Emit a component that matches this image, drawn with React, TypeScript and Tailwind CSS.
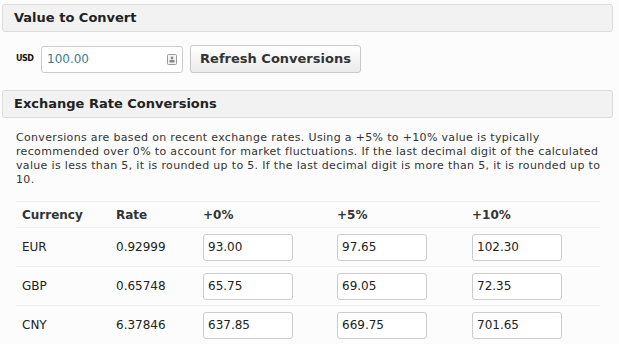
import React from "react";

const rows = [
  { code: "EUR", rate: "0.92999", values: ["93.00", "97.65", "102.30"] },
  { code: "GBP", rate: "0.65748", values: ["65.75", "69.05", "72.35"] },
  { code: "CNY", rate: "6.37846", values: ["637.85", "669.75", "701.65"] },
];

function SectionHeader({ title }: { title: string }) {
  return (
    <div className="ml-[2px] w-[611px] h-[28px] flex items-center px-[11px] bg-[#f2f2f2] border border-[#dcdcdc] rounded-[3px]">
      <h2 className="text-[13px] font-bold text-[#222]">{title}</h2>
    </div>
  );
}

function FieldIcon() {
  return (
    <svg width="10" height="11" viewBox="0 0 10 11" className="shrink-0">
      <rect x="0.5" y="0.5" width="9" height="10" rx="1" fill="#f4f4f4" stroke="#999" />
      <circle cx="5" cy="4" r="1.4" fill="#888" />
      <rect x="2.5" y="6" width="5" height="2.5" fill="#888" />
    </svg>
  );
}

export default function App() {
  return (
    <main
      className="w-[619px] h-[344px] overflow-hidden bg-[#fcfcfc] text-[#333] pt-[4px]"
      style={{ fontFamily: '"DejaVu Sans", Verdana, sans-serif' }}
    >
      <SectionHeader title="Value to Convert" />

      {/* Value input row */}
      <div className="flex items-center mt-[13px] pl-[16px] h-[28px]">
        <span className="text-[8px] font-bold tracking-[-0.5px] text-[#111] w-[25px]">USD</span>
        <div className="w-[142px] h-[27px] flex items-center justify-between px-[5px] bg-white border border-[#ccc] rounded-[3px]">
          <span className="text-[12px] text-[#3b7d8f]">100.00</span>
          <FieldIcon />
        </div>
        <button className="ml-[7px] w-[171px] h-[28px] flex items-center justify-center text-[13px] font-bold text-[#333] border border-[#c8c8c8] rounded-[3px] bg-gradient-to-b from-white to-[#ebebeb]">
          Refresh Conversions
        </button>
      </div>

      <div className="mt-[17px]">
        <SectionHeader title="Exchange Rate Conversions" />
      </div>

      <p className="ml-[16px] mt-[13px] w-[586px] text-[11px] leading-[14px] tracking-[0.33px] text-[#333]">
        Conversions are based on recent exchange rates. Using a +5% to +10% value is typically
        recommended over 0% to account for market fluctuations. If the last decimal digit of the
        calculated value is less than 5, it is rounded up to 5. If the last decimal digit is more
        than 5, it is rounded up to 10.
      </p>

      {/* Conversions table */}
      <div className="ml-[16px] mt-[14px] w-[584px] text-[12px]">
        <div className="grid grid-cols-[94px_87px_134px_135px_134px] h-[27px] items-center border-t border-b border-[#efefef] font-bold">
          <div className="pl-[6px]">Currency</div>
          <div className="pl-[6px]">Rate</div>
          <div className="pl-[6px]">+0%</div>
          <div className="pl-[6px]">+5%</div>
          <div className="pl-[6px]">+10%</div>
        </div>
        {rows.map((r) => (
          <div
            key={r.code}
            className="grid grid-cols-[94px_87px_134px_135px_134px] h-[39px] items-center border-b border-[#efefef]"
          >
            <div className="pl-[6px] text-[#222]">{r.code}</div>
            <div className="pl-[6px] text-[#222]">{r.rate}</div>
            {r.values.map((v) => (
              <div key={v} className="pl-[6px]">
                <div className="w-[90px] h-[27px] flex items-center px-[4px] bg-white border border-[#ccc] rounded-[3px] text-[#222]">
                  {v}
                </div>
              </div>
            ))}
          </div>
        ))}
      </div>
    </main>
  );
}
